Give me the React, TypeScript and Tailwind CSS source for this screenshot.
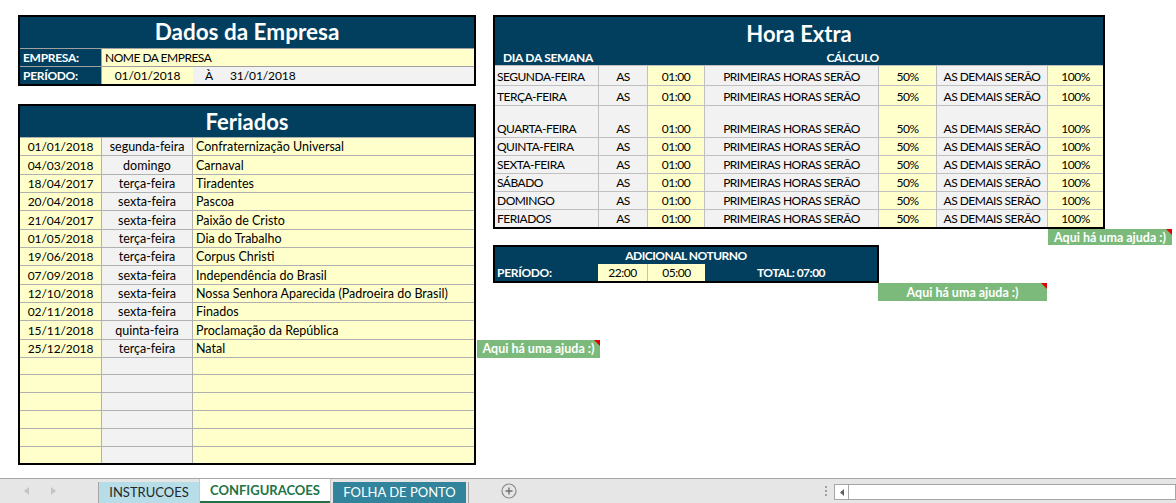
import React from 'react';

const FONT = { fontFamily: 'Lato, "Open Sans", "Liberation Sans", sans-serif' };

const feriados: [string, string, string][] = [
  ['01/01/2018', 'segunda-feira', 'Confraternização Universal'],
  ['04/03/2018', 'domingo', 'Carnaval'],
  ['18/04/2017', 'terça-feira', 'Tiradentes'],
  ['20/04/2018', 'sexta-feira', 'Pascoa'],
  ['21/04/2017', 'sexta-feira', 'Paixão de Cristo'],
  ['01/05/2018', 'terça-feira', 'Dia do Trabalho'],
  ['19/06/2018', 'terça-feira', 'Corpus Christi'],
  ['07/09/2018', 'sexta-feira', 'Independência do Brasil'],
  ['12/10/2018', 'sexta-feira', 'Nossa Senhora Aparecida (Padroeira do Brasil)'],
  ['02/11/2018', 'sexta-feira', 'Finados'],
  ['15/11/2018', 'quinta-feira', 'Proclamação da República'],
  ['25/12/2018', 'terça-feira', 'Natal'],
  ['', '', ''],
  ['', '', ''],
  ['', '', ''],
  ['', '', ''],
  ['', '', ''],
  ['', '', ''],
];

const dias: [string, string][] = [
  ['SEGUNDA-FEIRA', 'h-[20px]'],
  ['TERÇA-FEIRA', 'h-[20px]'],
  ['QUARTA-FEIRA', 'h-[32px]'],
  ['QUINTA-FEIRA', 'h-[18px]'],
  ['SEXTA-FEIRA', 'h-[18px]'],
  ['SÁBADO', 'h-[18px]'],
  ['DOMINGO', 'h-[18px]'],
  ['FERIADOS', 'h-[18px]'],
];

// balão verde "Aqui há uma ajuda :)" com o triângulo vermelho de comentário
function Ajuda({ className = '' }: { className?: string }) {
  return (
    <div
      className={`flex items-center justify-center bg-[#7cba7c] text-[12.5px] font-bold leading-[15px] text-white ${className}`}
    >
      Aqui há uma ajuda :)
      <span className="absolute right-0 top-0 h-0 w-0 border-l-[6px] border-t-[6px] border-l-transparent border-t-[#e00000]" />
    </div>
  );
}

function DadosEmpresa() {
  return (
    <div className="w-[458px] border-2 border-black bg-[#023f5e]">
      <div className="flex h-[31px] items-center justify-center text-[22.5px] font-bold leading-none text-white">
        Dados da Empresa
      </div>
      <div className="flex h-[18px] border-t border-[#a0a0a0]">
        <div className="flex w-[82px] items-end border-r border-[#a0a0a0] pb-[1px] pl-[3px] text-[12px] font-bold tracking-[-0.3px] text-white">
          EMPRESA:
        </div>
        <div className="flex flex-1 items-end bg-[#ffffcc] pb-[1px] pl-[3px] text-[12px] tracking-[-0.5px] text-black">
          NOME DA EMPRESA
        </div>
      </div>
      <div className="flex h-[18px] border-t border-[#a0a0a0]">
        <div className="flex w-[82px] items-end border-r border-[#a0a0a0] pb-[1px] pl-[3px] text-[12px] font-bold tracking-[-0.3px] text-white">
          PERÍODO:
        </div>
        <div className="flex w-[91px] items-end justify-center bg-[#ffffcc] pb-[1px] text-[12px] tracking-[-0.1px] text-black">
          01/01/2018
        </div>
        <div className="flex flex-1 items-end bg-[#f2f2f2] pb-[1px] pl-[12px] text-[12px] tracking-[-0.1px] text-black">
          <span className="w-[25px]">À</span>
          <span>31/01/2018</span>
        </div>
      </div>
    </div>
  );
}

function Feriados() {
  return (
    <div className="mt-[18px] w-[458px] border-2 border-black bg-[#ffffcc]">
      <div className="flex h-[31px] items-center justify-center bg-[#023f5e] text-[22px] font-bold leading-none text-white">
        Feriados
      </div>
      {feriados.map(([data, dia, nome], i) => (
        <div
          key={i}
          className={`relative flex ${i < 12 ? 'h-[18.33px]' : i === 12 || i === 17 ? 'h-[17px]' : 'h-[18px]'} border-t border-[#b0b0b0] text-[12.5px] text-black`}
        >
          <div className="flex w-[82px] items-end justify-center border-r border-[#b0b0b0] pb-[1px] text-[12px] tracking-[-0.1px]">
            {data}
          </div>
          <div className="flex w-[91px] items-end justify-center border-r border-[#b0b0b0] bg-[#f2f2f2] pb-[1px]">{dia}</div>
          <div className="flex flex-1 items-end pb-[1px] pl-[3px]">{nome}</div>
          {i === 11 && <Ajuda className="absolute left-[457px] top-0 h-[18px] w-[123px]" />}
        </div>
      ))}
    </div>
  );
}

function HoraExtra() {
  const cell = 'flex items-end justify-center border-r border-[#c0c0c0] pb-[1px]';
  return (
    <div className="w-[612px] border-2 border-black bg-[#023f5e]">
      <div className="flex h-[33px] items-center justify-center text-[22px] font-bold leading-none text-white">Hora Extra</div>
      <div className="grid h-[15px] grid-cols-[104px_49px_57px_174px_58px_111px_55px] text-[12px] font-bold tracking-[-0.3px] text-white">
        <div className="col-span-2 flex items-center pl-[8px]">DIA DA SEMANA</div>
        <div />
        <div className="flex items-center justify-end">CÁLCULO</div>
      </div>
      {dias.map(([dia, h]) => (
        <div
          key={dia}
          className={`grid ${h} grid-cols-[104px_49px_57px_174px_58px_111px_55px] border-t border-[#c0c0c0] text-[12px] tracking-[-0.5px] text-black`}
        >
          <div className="flex items-end border-r border-[#c0c0c0] bg-[#f2f2f2] pb-[1px] pl-[2px]">{dia}</div>
          <div className={`${cell} bg-[#f2f2f2]`}>AS</div>
          <div className={`${cell} bg-[#ffffcc]`}>01:00</div>
          <div className={`${cell} bg-[#f2f2f2]`}>PRIMEIRAS HORAS SERÃO</div>
          <div className={`${cell} bg-[#ffffcc]`}>50%</div>
          <div className={`${cell} bg-[#f2f2f2]`}>AS DEMAIS SERÃO</div>
          <div className="flex items-end justify-center bg-[#ffffcc] pb-[1px]">100%</div>
        </div>
      ))}
    </div>
  );
}

function AdicionalNoturno() {
  return (
    <div className="w-[386px] border-2 border-black bg-[#023f5e] text-[12px] tracking-[-0.5px]">
      <div className="flex h-[17px] items-end justify-center pb-[1px] font-bold text-white">ADICIONAL NOTURNO</div>
      <div className="grid h-[17px] grid-cols-[103px_50px_57px_172px]">
        <div className="flex items-end pb-[1px] pl-[2px] font-bold tracking-[-0.3px] text-white">PERÍODO:</div>
        <div className="flex items-end justify-center border-r border-[#c0c0c0] bg-[#ffffcc] pb-[1px] text-black">22:00</div>
        <div className="flex items-end justify-center bg-[#ffffcc] pb-[1px] text-black">05:00</div>
        <div className="flex items-end justify-center pb-[1px] font-bold text-white">TOTAL: 07:00</div>
      </div>
    </div>
  );
}

function TabBar() {
  return (
    <div className="flex h-[25px] items-end border-t border-[#a6a6a6] bg-[#e6e6e6] text-[13px]">
      <div className="flex h-full w-[98px] items-center gap-[22px] pl-[24px]">
        <svg width="5" height="8" viewBox="0 0 5 8">
          <polygon points="5,0 0,4 5,8" fill="#c4c4c4" />
        </svg>
        <svg width="5" height="8" viewBox="0 0 5 8">
          <polygon points="0,0 5,4 0,8" fill="#c4c4c4" />
        </svg>
      </div>
      <div className="h-[21px] w-px bg-[#a6a6a6]" />
      <div className="mt-[2px] flex h-[21px] w-[100px] items-center justify-center bg-[#b7dde8] text-[#262626]">
        INSTRUCOES
      </div>
      <div className="relative flex h-[24px] w-[132px] items-center justify-center border-x border-[#c8c8c8] bg-white pb-[1px] font-bold text-[#217346]">
        CONFIGURACOES
        <span className="absolute bottom-0 left-0 right-0 h-[2px] bg-[#217346]" />
      </div>
      <div className="ml-[2px] flex h-[21px] w-[133px] items-center justify-center bg-[#31849b] text-white">FOLHA DE PONTO</div>
      <div className="ml-[2px] h-[21px] w-px bg-[#a6a6a6]" />
      <div className="flex h-full w-[80px] items-center justify-center">
        <svg width="16" height="16" viewBox="0 0 16 16">
          <circle cx="8" cy="8" r="7" fill="none" stroke="#8a8a8a" strokeWidth="1.2" />
          <path d="M8 4.5v7M4.5 8h7" stroke="#6f6f6f" strokeWidth="1.4" />
        </svg>
      </div>
      <div className="flex-1" />
      <div className="flex h-full w-[16px] flex-col items-center justify-center gap-[2px]">
        <span className="h-[2px] w-[2px] bg-[#a0a0a0]" />
        <span className="h-[2px] w-[2px] bg-[#a0a0a0]" />
        <span className="h-[2px] w-[2px] bg-[#a0a0a0]" />
      </div>
      <div className="mb-[3px] flex h-[16px] w-[342px] border border-[#a6a6a6] bg-white">
        <div className="flex w-[14px] items-center justify-center border-r border-[#a6a6a6]">
          <svg width="4" height="7" viewBox="0 0 4 7">
            <polygon points="4,0 0,3.5 4,7" fill="#606060" />
          </svg>
        </div>
      </div>
    </div>
  );
}

export default function App() {
  return (
    <div className="flex h-[503px] w-[1176px] flex-col overflow-hidden bg-white leading-[15px]" style={FONT}>
      <div className="flex flex-1 items-start gap-[17px] pl-[18px] pt-[15px]">
        <div className="flex flex-col">
          <DadosEmpresa />
          <Feriados />
        </div>
        <div className="flex flex-col">
          <HoraExtra />
          <Ajuda className="relative ml-[555px] h-[16px] w-[124px]" />
          <AdicionalNoturno />
          <Ajuda className="relative ml-[385px] h-[18px] w-[169px]" />
        </div>
      </div>
      <TabBar />
    </div>
  );
}
